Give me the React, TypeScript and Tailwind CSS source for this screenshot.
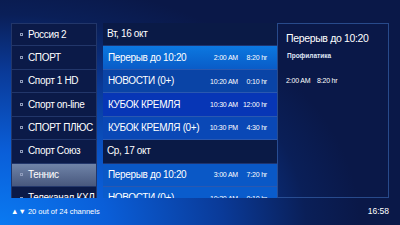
import React from "react";

const channels = [
  "Россия 2",
  "СПОРТ",
  "Спорт 1 HD",
  "Спорт on-line",
  "СПОРТ ПЛЮС",
  "Спорт Союз",
  "Теннис",
  "Телеканал КХЛ",
];

type Row =
  | { kind: "day"; label: string }
  | { kind: "show"; title: string; start: string; len: string; bg: string };

const rows: Row[] = [
  { kind: "day", label: "Вт, 16 окт" },
  { kind: "show", title: "Перерыв до 10:20", start: "2:00 AM", len: "8:20 hr", bg: "bg-gradient-to-b from-[#0c78e0] to-[#0a5cc8]" },
  { kind: "show", title: "НОВОСТИ (0+)", start: "10:20 AM", len: "0:10 hr", bg: "bg-[#0a44a6]" },
  { kind: "show", title: "КУБОК КРЕМЛЯ", start: "10:30 AM", len: "12:00 hr", bg: "bg-[#0736b6]" },
  { kind: "show", title: "КУБОК КРЕМЛЯ (0+)", start: "10:30 PM", len: "4:30 hr", bg: "bg-[#0a48b6]" },
  { kind: "day", label: "Ср, 17 окт" },
  { kind: "show", title: "Перерыв до 10:20", start: "3:00 AM", len: "7:20 hr", bg: "bg-[#0a58c6]" },
  { kind: "show", title: "НОВОСТИ (0+)", start: "10:20 AM", len: "0:10 hr", bg: "bg-[#0a5ccc]" },
];

export default function App() {
  return (
    <div
      className="w-[400px] h-[225px] overflow-hidden flex flex-col text-white bg-[radial-gradient(ellipse_90%_110%_at_0%_100%,#0a7af2_0%,#0a5ed8_30%,#0a3a98_62%,#0a1f58_85%,#0a1848_100%)]"
      style={{ fontFamily: '"Liberation Sans", Arial, sans-serif' }}
    >
      <div className="flex pl-[11px] pt-[23px] h-[198px]">
        {/* channel list */}
        <div className="w-[86px] h-[175px] overflow-hidden flex flex-col">
          {channels.map((c, i) => {
            const active = c === "Теннис";
            return (
              <div
                key={c}
                className={`h-[23.45px] shrink-0 flex items-center gap-[5px] pl-[8px] border border-[#22366a] ${
                  i > 0 ? "border-t-0" : ""
                } ${
                  active
                    ? "bg-gradient-to-b from-[#7084a8] to-[#48587e] border-[#8a9ac0]"
                    : "bg-[#0b1a48]"
                }`}
              >
                <span className="w-[3px] h-[3px] border border-[#8f9cbc] shrink-0" />
                <span className="text-[10px] tracking-[-0.35px] leading-none whitespace-nowrap">{c}</span>
              </div>
            );
          })}
        </div>

        {/* programme list */}
        <div className="ml-[6px] w-[174px] h-[175px] overflow-hidden flex flex-col">
          {rows.map((r, i) =>
            r.kind === "day" ? (
              <div
                key={i}
                className="h-[23.45px] shrink-0 flex items-center pl-[4px] bg-[#0a1a46] border-b border-[#1e3470]"
              >
                <span className="text-[10px] tracking-[-0.35px] leading-none">{r.label}</span>
              </div>
            ) : (
              <div
                key={i}
                className={`h-[23.45px] shrink-0 flex items-center pl-[5px] pr-[10px] border-b border-[#2a58b0] ${r.bg}`}
              >
                <span className="text-[10px] tracking-[-0.35px] leading-none flex-1 min-w-0 whitespace-nowrap">{r.title}</span>
                <span className="text-[7px] tracking-[-0.2px] leading-none w-[40px] shrink-0 text-right whitespace-nowrap">{r.start}</span>
                <span className="text-[7px] tracking-[-0.2px] leading-none w-[29px] shrink-0 text-right whitespace-nowrap">{r.len}</span>
              </div>
            )
          )}
        </div>

        {/* info panel */}
        <div className="w-[112px] h-[175px] border border-[#3560a8]/70 flex flex-col pl-[8px]">
          <div className="text-[10.5px] tracking-[-0.35px] leading-none mt-[9px] whitespace-nowrap">Перерыв до 10:20</div>
          <div className="text-[6.5px] leading-none mt-[9px] ml-[1px] font-bold text-[#dfe6f4]">Профилатика</div>
          <div className="flex text-[7px] tracking-[-0.2px] leading-none mt-[18px] whitespace-nowrap">
            <span className="w-[31px]">2:00 AM</span>
            <span>8:20 hr</span>
          </div>
        </div>
      </div>

      {/* footer */}
      <div className="flex-1 flex items-center justify-between pl-[11px] pr-[11px]">
        <span className="text-[7.5px] leading-none">▲▼ 20 out of 24 channels</span>
        <span className="text-[8.5px] leading-none">16:58</span>
      </div>
    </div>
  );
}
